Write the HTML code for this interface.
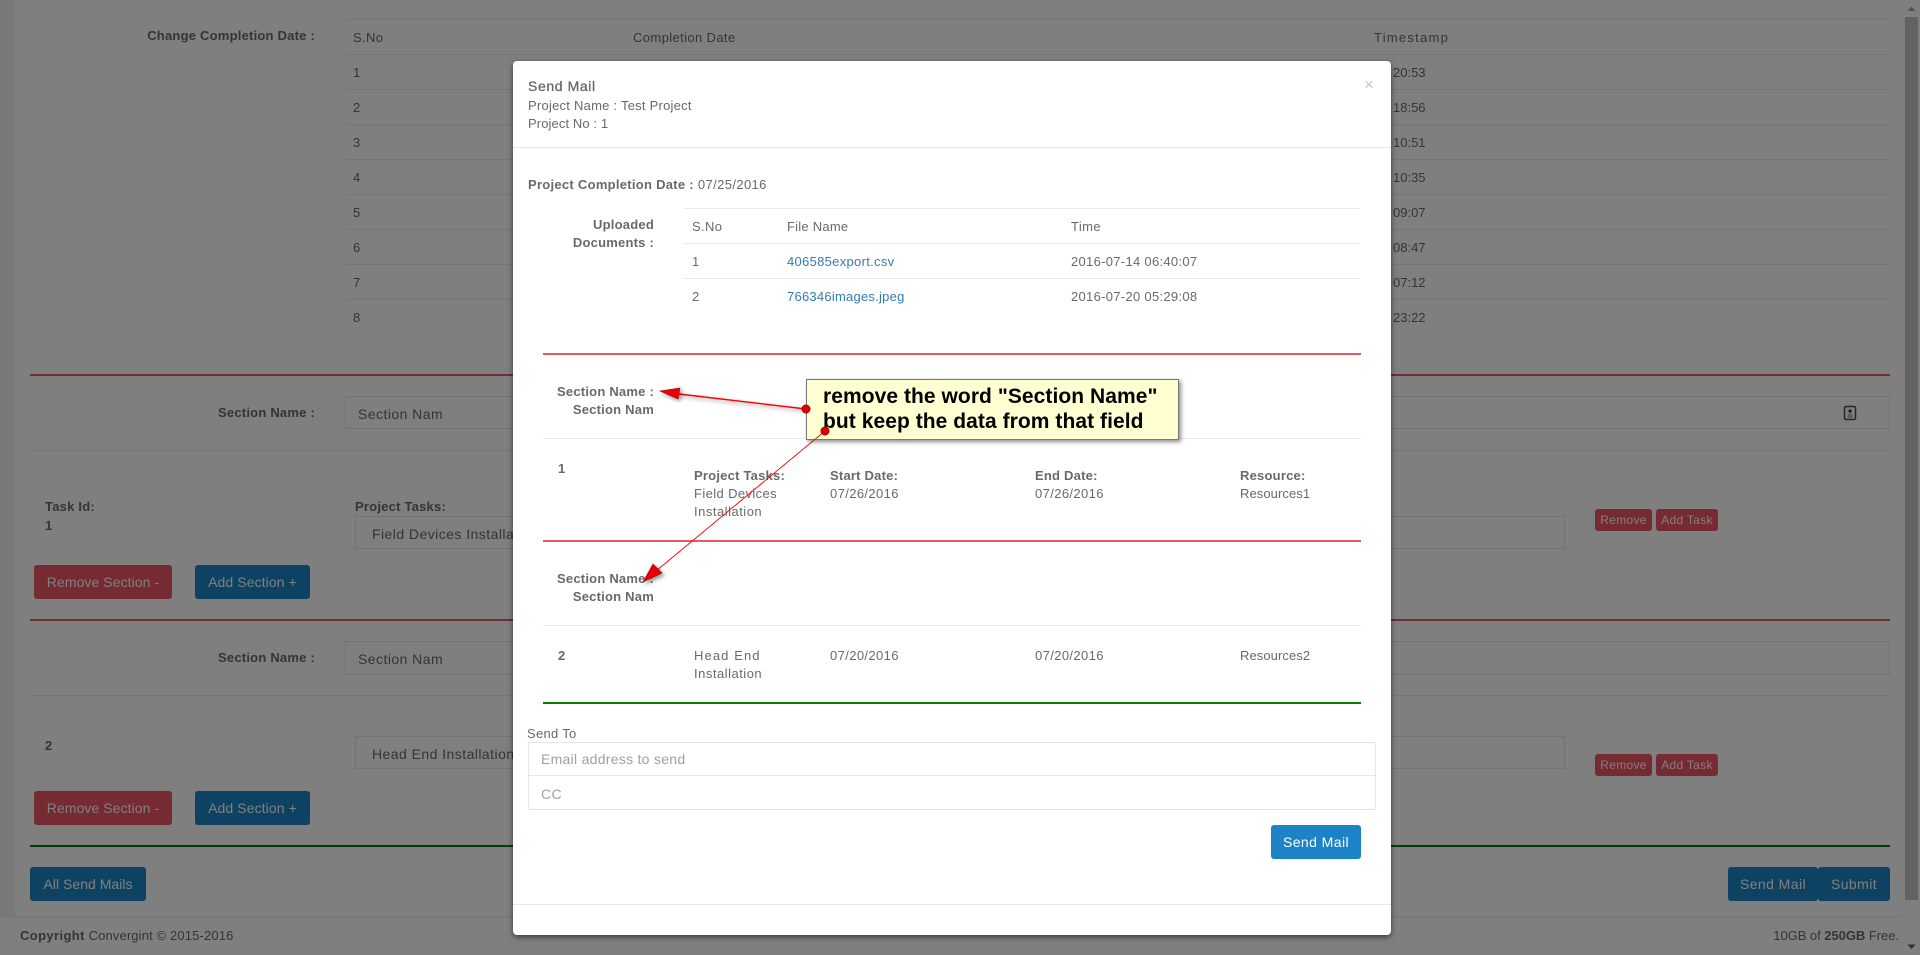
<!DOCTYPE html>
<html>
<head>
<meta charset="utf-8">
<title>Send Mail</title>
<style>
html,body{margin:0;padding:0;width:1920px;height:955px;overflow:hidden;background:#fff;font-family:"Liberation Sans",sans-serif;font-size:13px;color:#676a6c}
.a{position:absolute}
.t{position:absolute;white-space:nowrap;line-height:20px;height:20px;letter-spacing:.38px}
.b{font-weight:bold;letter-spacing:.22px}
.l{position:absolute;height:1px;background:#e7eaec}
.i{position:absolute;box-sizing:border-box;border:1px solid #e5e6e7;background:#fff;font-size:14px;line-height:35px;white-space:nowrap;overflow:hidden;letter-spacing:.45px}
.btn{position:absolute;box-sizing:border-box;border-radius:3px;color:#fff;font-size:14px;display:flex;align-items:center;justify-content:center;white-space:nowrap;letter-spacing:.42px}
.red{background:#ed5565}
.blue{background:#1c84c6}
.sm{font-size:12px;letter-spacing:.3px}
.n{letter-spacing:.08px}
</style>
</head>
<body>
<!-- background page -->
<div class="a" style="left:0;top:0;width:15px;height:916px;background:#f3f3f4"></div>
<div class="l" style="left:0;top:916px;width:1903px;background:#e7eaec"></div>

<div class="t b" style="right:1605px;top:26px">Change Completion Date :</div>
<div class="l" style="left:345px;top:19px;width:1545px"></div>
<div class="l" style="left:345px;top:54px;width:1545px"></div>
<div class="l" style="left:345px;top:89px;width:1545px"></div>
<div class="l" style="left:345px;top:124px;width:1545px"></div>
<div class="l" style="left:345px;top:159px;width:1545px"></div>
<div class="l" style="left:345px;top:194px;width:1545px"></div>
<div class="l" style="left:345px;top:229px;width:1545px"></div>
<div class="l" style="left:345px;top:264px;width:1545px"></div>
<div class="l" style="left:345px;top:299px;width:1545px"></div>
<div class="t" style="left:353px;top:28px">S.No</div>
<div class="t" style="left:633px;top:28px">Completion Date</div>
<div class="t" style="left:1374px;top:28px;letter-spacing:1.25px">Timestamp</div>
<div class="t" style="left:353px;top:63px">1</div>
<div class="t" style="left:353px;top:98px">2</div>
<div class="t" style="left:353px;top:133px">3</div>
<div class="t" style="left:353px;top:168px">4</div>
<div class="t" style="left:353px;top:203px">5</div>
<div class="t" style="left:353px;top:238px">6</div>
<div class="t" style="left:353px;top:273px">7</div>
<div class="t" style="left:353px;top:308px">8</div>
<div class="t" style="left:1393px;top:63px;letter-spacing:0">20:53</div>
<div class="t" style="left:1393px;top:98px;letter-spacing:0">18:56</div>
<div class="t" style="left:1393px;top:133px;letter-spacing:0">10:51</div>
<div class="t" style="left:1393px;top:168px;letter-spacing:0">10:35</div>
<div class="t" style="left:1393px;top:203px;letter-spacing:0">09:07</div>
<div class="t" style="left:1393px;top:238px;letter-spacing:0">08:47</div>
<div class="t" style="left:1393px;top:273px;letter-spacing:0">07:12</div>
<div class="t" style="left:1393px;top:308px;letter-spacing:0">23:22</div>

<div class="a" style="left:30px;top:374px;width:1860px;height:2px;background:#ed5565"></div>
<div class="t b" style="right:1605px;top:403px">Section Name :</div>
<div class="i" style="left:345px;top:396px;width:1545px;height:33px;padding-left:12px">Section Nam</div>
<svg class="a" style="left:1843px;top:405px" width="15" height="16" viewBox="0 0 15 16"><rect x="1.500" y="1.500" width="11" height="13" rx="1.500" fill="none" stroke="#000" stroke-opacity=".7" stroke-width="1.500"/><path d="M7 3.500v2.500M5.200 5.500h3.600L7 8z" fill="#000" fill-opacity=".7" stroke="#000" stroke-opacity=".7" stroke-width=".7"/><path d="M4.500 10h5M4.500 12h5" stroke="#000" stroke-opacity=".55" stroke-width="1"/></svg>
<div class="l" style="left:30px;top:450px;width:1860px"></div>

<div class="t b" style="left:45px;top:497px">Task Id:</div>
<div class="t b" style="left:45px;top:516px">1</div>
<div class="t b" style="left:355px;top:497px">Project Tasks:</div>
<div class="i" style="left:355px;top:516px;width:1210px;height:33px;padding-left:16px">Field Devices Installation</div>
<div class="btn sm red" style="left:1595px;top:509px;width:57px;height:22px">Remove</div>
<div class="btn sm red" style="left:1656px;top:509px;width:62px;height:22px">Add Task</div>
<div class="btn red" style="left:34px;top:565px;width:138px;height:34px;letter-spacing:.07px">Remove Section -</div>
<div class="btn blue" style="left:195px;top:565px;width:115px;height:34px;letter-spacing:.1px">Add Section +</div>

<div class="a" style="left:30px;top:619px;width:1860px;height:2px;background:#ed5565"></div>
<div class="t b" style="right:1605px;top:648px">Section Name :</div>
<div class="i" style="left:345px;top:641px;width:1545px;height:34px;padding-left:12px">Section Nam</div>
<div class="l" style="left:30px;top:695px;width:1860px"></div>

<div class="t b" style="left:45px;top:736px">2</div>
<div class="i" style="left:355px;top:736px;width:1210px;height:33px;padding-left:16px">Head End Installation</div>
<div class="btn sm red" style="left:1595px;top:754px;width:57px;height:22px">Remove</div>
<div class="btn sm red" style="left:1656px;top:754px;width:62px;height:22px">Add Task</div>
<div class="btn red" style="left:34px;top:791px;width:138px;height:34px;letter-spacing:.07px">Remove Section -</div>
<div class="btn blue" style="left:195px;top:791px;width:115px;height:34px;letter-spacing:.1px">Add Section +</div>

<div class="a" style="left:30px;top:845px;width:1860px;height:2px;background:#008000"></div>
<div class="btn blue" style="left:30px;top:867px;width:116px;height:34px;letter-spacing:.02px">All Send Mails</div>
<div class="btn blue" style="left:1728px;top:867px;width:90px;height:34px">Send Mail</div>
<div class="btn blue" style="left:1818px;top:867px;width:72px;height:34px">Submit</div>

<div class="t" style="left:20px;top:926px;letter-spacing:.14px"><b style="letter-spacing:.38px">Copyright</b> Convergint © 2015-2016</div>
<div class="t" style="right:21px;top:926px;letter-spacing:-.04px">10GB of <b>250GB</b> Free.</div>

<!-- overlay -->
<div class="a" style="left:0;top:0;width:1920px;height:955px;background:rgba(0,0,0,.5)"></div>

<!-- scrollbar -->
<div class="a" style="left:1905px;top:17px;width:13px;height:883px;background:#626262"></div>
<svg class="a" style="left:1903px;top:0" width="17" height="17" viewBox="0 0 17 17"><path d="M4.500 11L8.500 6.500L12.500 11z" fill="#505050"/></svg>
<svg class="a" style="left:1903px;top:938px" width="17" height="17" viewBox="0 0 17 17"><path d="M4.500 6.500L8.500 11L12.500 6.500z" fill="#303030"/></svg>

<!-- modal -->
<div class="a" style="left:513px;top:61px;width:878px;height:874px;background:#fff;border-radius:4px;box-shadow:0 2px 6px rgba(0,0,0,.55)"></div>
<div class="t" style="left:528px;top:76px;font-size:14px;letter-spacing:.6px;-webkit-text-stroke:.3px #676a6c">Send Mail</div>
<div class="t" style="left:528px;top:96px;letter-spacing:.24px">Project Name : Test Project</div>
<div class="t" style="left:528px;top:114px;letter-spacing:.1px">Project No : 1</div>
<div class="t" style="left:1364px;top:75px;font-size:17px;color:#c4c4c4;letter-spacing:0">×</div>
<div class="l" style="left:513px;top:147px;width:878px;background:#e5e5e5"></div>

<div class="t" style="left:528px;top:175px"><b style="letter-spacing:.28px">Project Completion Date :</b> 07/25/2016</div>
<div class="t b" style="right:1266px;top:215px">Uploaded</div>
<div class="t b" style="right:1266px;top:233px">Documents :</div>
<div class="l" style="left:684px;top:208px;width:676px"></div>
<div class="l" style="left:684px;top:243px;width:676px"></div>
<div class="l" style="left:684px;top:278px;width:676px"></div>
<div class="t" style="left:692px;top:217px">S.No</div>
<div class="t" style="left:787px;top:217px;letter-spacing:.24px">File Name</div>
<div class="t" style="left:1071px;top:217px">Time</div>
<div class="t" style="left:692px;top:252px">1</div>
<div class="t" style="left:787px;top:252px;color:#337ab7;letter-spacing:.3px">406585export.csv</div>
<div class="t" style="left:1071px;top:252px;letter-spacing:.3px">2016-07-14 06:40:07</div>
<div class="t" style="left:692px;top:287px">2</div>
<div class="t" style="left:787px;top:287px;color:#337ab7;letter-spacing:.24px">766346images.jpeg</div>
<div class="t" style="left:1071px;top:287px;letter-spacing:.3px">2016-07-20 05:29:08</div>

<div class="a" style="left:543px;top:353px;width:818px;height:2px;background:#ed5565"></div>
<div class="t b" style="right:1266px;top:382px">Section Name :</div>
<div class="t b" style="right:1266px;top:400px">Section Nam</div>
<div class="l" style="left:543px;top:438px;width:818px"></div>
<div class="t b" style="left:558px;top:459px">1</div>
<div class="t b" style="left:694px;top:466px">Project Tasks:</div>
<div class="t b" style="left:830px;top:466px">Start Date:</div>
<div class="t b" style="left:1035px;top:466px">End Date:</div>
<div class="t b" style="left:1240px;top:466px">Resource:</div>
<div class="t" style="left:694px;top:484px">Field Devices</div>
<div class="t" style="left:694px;top:502px;letter-spacing:.5px">Installation</div>
<div class="t" style="left:830px;top:484px">07/26/2016</div>
<div class="t" style="left:1035px;top:484px">07/26/2016</div>
<div class="t n" style="left:1240px;top:484px">Resources1</div>

<div class="a" style="left:543px;top:540px;width:818px;height:2px;background:#ed5565"></div>
<div class="t b" style="right:1266px;top:569px">Section Name :</div>
<div class="t b" style="right:1266px;top:587px">Section Nam</div>
<div class="l" style="left:543px;top:625px;width:818px"></div>
<div class="t b" style="left:558px;top:646px">2</div>
<div class="t" style="left:694px;top:646px;letter-spacing:1.1px">Head End</div>
<div class="t" style="left:694px;top:664px;letter-spacing:.5px">Installation</div>
<div class="t" style="left:830px;top:646px">07/20/2016</div>
<div class="t" style="left:1035px;top:646px">07/20/2016</div>
<div class="t n" style="left:1240px;top:646px">Resources2</div>
<div class="a" style="left:543px;top:702px;width:818px;height:2px;background:#008000"></div>

<div class="t" style="left:527px;top:724px;letter-spacing:.3px">Send To</div>
<div class="i" style="left:528px;top:742px;width:848px;height:34px;padding-left:12px;color:#a0a0a0;line-height:33px;letter-spacing:.28px">Email address to send</div>
<div class="i" style="left:528px;top:775px;width:848px;height:35px;padding-left:12px;color:#a0a0a0;line-height:36px">CC</div>
<div class="btn blue" style="left:1271px;top:825px;width:90px;height:34px">Send Mail</div>
<div class="l" style="left:513px;top:904px;width:878px;background:#e5e5e5"></div>

<!-- annotation -->
<svg class="a" style="left:630px;top:370px" width="570" height="240" viewBox="630 370 570 240">
<defs><filter id="s" x="-20%" y="-20%" width="150%" height="150%"><feDropShadow dx="2" dy="2" stdDeviation="2" flood-color="#000" flood-opacity=".45"/></filter></defs>
<rect x="806.500" y="379.500" width="372" height="60" fill="#ffffd2" stroke="#777" filter="url(#s)"/>
<path d="M806 409L679 394" stroke="#f00" stroke-width="1.400" fill="none" filter="url(#s)"/>
<path d="M825 431L656 571" stroke="#f00" stroke-width=".9" fill="none"/>
<path d="M660 391L680 388L678 399z" fill="#e80000" stroke="#a00" stroke-width=".6" filter="url(#s)"/>
<path d="M643 582L653 564L662 573z" fill="#e80000" stroke="#a00" stroke-width=".6" filter="url(#s)"/>
</svg>
<div class="t" style="left:823px;top:387px;font-size:21px;font-weight:bold;color:#000;letter-spacing:.06px">remove the word "Section Name"</div>
<div class="t" style="left:823px;top:412px;font-size:21px;font-weight:bold;color:#000;letter-spacing:.06px">but keep the data from that field</div>
<svg class="a" style="left:795px;top:400px" width="45" height="45" viewBox="795 400 45 45">
<circle cx="806" cy="409" r="4" fill="#e00000" stroke="#a00000"/>
<circle cx="825" cy="431" r="4" fill="#e00000" stroke="#a00000"/>
</svg>
</body>
</html>
